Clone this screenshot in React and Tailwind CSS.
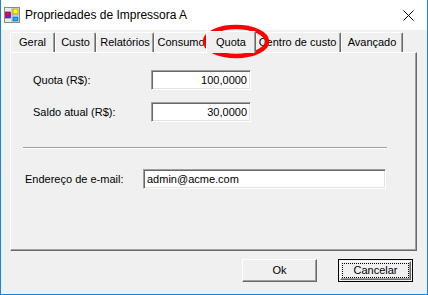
import { useState } from "react";

const tabs = [
    { label: "Geral", w: "w-[45px]" },
    { label: "Custo", w: "w-[41px]" },
    { label: "Relatórios", w: "w-[58px]" },
    { label: "Consumo", w: "w-[54px]" },
    { label: "Quota", w: "w-[50px]", active: true },
    { label: "Centro de custo", w: "w-[87px]" },
    { label: "Avançado", w: "w-[62px]" },
];

function PrinterIcon() {
    return (
        <svg width="16" height="16" viewBox="0 0 16 16" className="shrink-0">
            <rect x="0.5" y="0.5" width="15" height="15" fill="#e8e8e8" stroke="#8a8a8a" />
            <line x1="8" y1="1" x2="8" y2="15" stroke="#b0b0b0" />
            <line x1="1" y1="8" x2="15" y2="8" stroke="#b0b0b0" />
            <rect x="9" y="2" width="5" height="5" fill="#ffff00" stroke="#808000" strokeWidth="0.6" />
            <rect x="1.5" y="5" width="5" height="6" fill="#e0006a" stroke="#6a0030" strokeWidth="0.6" />
            <rect x="3.5" y="8" width="3" height="3" fill="#2040ff" />
            <rect x="9" y="10" width="5" height="4" fill="#00c0ff" stroke="#0040c0" strokeWidth="0.6" />
        </svg>
    );
}

function Field({ value, className, align = "right" }) {
    return (
        <div
            className={`h-[20px] bg-white border border-t-[#a0a0a0] border-l-[#a0a0a0] border-b-white border-r-white shadow-[inset_1px_1px_0_#696969,inset_-1px_-1px_0_#e3e3e3] flex items-center ${align === "right" ? "justify-end pr-[3px]" : "justify-start pl-[3px]"} ${className}`}
        >
            <span className="leading-none">{value}</span>
        </div>
    );
}

function App() {
    const [tab] = useState("Quota");

    return (
        <div className="relative w-[428px] h-[295px] bg-[#f0f0f0] border-x border-b border-[#1883d7] flex flex-col font-['Liberation_Sans',Arial,sans-serif] text-[11px] text-black overflow-hidden">
            {/* title bar */}
            <div className="h-[30px] bg-white flex items-center pl-[3px] pr-[13px] shrink-0">
                <PrinterIcon />
                <span className="ml-[5px] text-[12px] flex-1">Propriedades de Impressora A</span>
                <svg width="11" height="11" viewBox="0 0 11 11">
                    <path d="M0.5 0.5 L10.5 10.5 M10.5 0.5 L0.5 10.5" stroke="#000" strokeWidth="1" />
                </svg>
            </div>

            {/* tabs */}
            <div className="pl-[9px] pr-[10px] flex flex-col">
                <div className="h-[22px] flex items-end">
                    {tabs.map((t) =>
                        t.label === tab ? (
                            <div
                                key={t.label}
                                className={`${t.w} -mx-[2px] h-[22px] -mb-px relative z-10 bg-[#f0f0f0] border-l border-t border-white border-r border-r-[#696969] shadow-[inset_-1px_0_0_#a0a0a0] rounded-t-[2px] flex items-center justify-center pb-[1px]`}
                            >
                                {t.label}
                            </div>
                        ) : (
                            <div
                                key={t.label}
                                className={`${t.w} h-[20px] bg-[#f0f0f0] border-l border-t border-white border-r border-r-[#696969] shadow-[inset_-1px_0_0_#a0a0a0] rounded-t-[2px] flex items-center justify-center`}
                            >
                                {t.label}
                            </div>
                        )
                    )}
                </div>

                {/* panel */}
                <div className="h-[199px] border-l border-t border-white border-r border-b border-r-[#696969] border-b-[#696969] shadow-[inset_-1px_-1px_0_#a0a0a0] flex flex-col">
                    <div className="mt-[17px] ml-[22px] flex items-center">
                        <span className="w-[118px]">Quota (R$):</span>
                        <Field value="100,0000" className="w-[100px]" />
                    </div>
                    <div className="mt-[12px] ml-[22px] flex items-center">
                        <span className="w-[118px]">Saldo atual (R$):</span>
                        <Field value="30,0000" className="w-[100px]" />
                    </div>
                    <div className="mt-[25px] ml-[12px] w-[364px] border-t border-t-[#a0a0a0] border-b border-b-white" />
                    <div className="mt-[20px] ml-[14px] flex items-center">
                        <span className="w-[118px]">Endereço de e-mail:</span>
                        <Field value="admin@acme.com" align="left" className="w-[243px]" />
                    </div>
                </div>
            </div>

            {/* buttons */}
            <div className="mt-[8px] pr-[14px] flex justify-end gap-[21px]">
                <button className="w-[75px] h-[23px] bg-[#f0f0f0] border border-t-white border-l-white border-b-[#696969] border-r-[#696969] shadow-[inset_-1px_-1px_0_#a0a0a0] flex items-center justify-center">
                    Ok
                </button>
                <button className="w-[75px] h-[23px] bg-[#f0f0f0] border border-black p-[1px] flex">
                    <div className="flex-1 border border-t-white border-l-white border-b-[#696969] border-r-[#696969] shadow-[inset_-1px_-1px_0_#a0a0a0] p-[1px] flex">
                        <div className="flex-1 border border-dotted border-black flex items-center justify-center">
                            Cancelar
                        </div>
                    </div>
                </button>
            </div>

            {/* red annotation ellipse */}
            <svg className="absolute left-[199px] top-[22px] pointer-events-none" width="72" height="40" viewBox="0 0 72 40">
                <ellipse cx="36" cy="19.5" rx="31" ry="14.5" fill="none" stroke="#ff0000" strokeWidth="4.5" />
            </svg>
        </div>
    );
}

export default App;
